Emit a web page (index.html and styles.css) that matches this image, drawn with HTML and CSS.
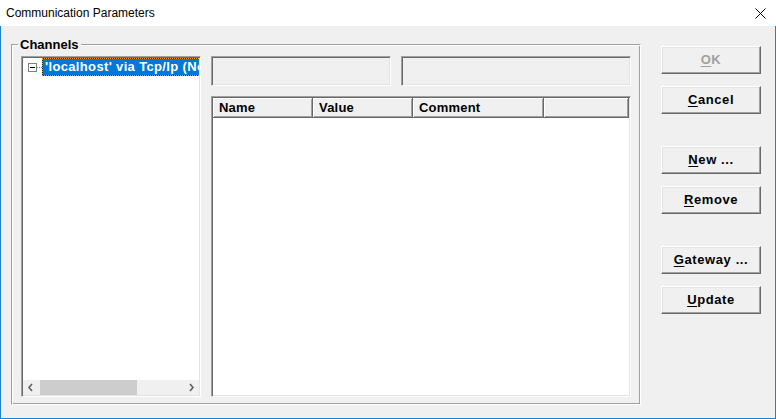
FILE: index.html
```html
<!DOCTYPE html>
<html>
<head>
<meta charset="utf-8">
<link rel="stylesheet" href="styles.css">
</head>
<body>
<div class="window">
  <div class="titlebar">
    <span class="title">Communication Parameters</span>
    <svg class="close" width="11" height="11" viewBox="0 0 11 11">
      <path d="M0.5 0.5 L10.5 10.5 M10.5 0.5 L0.5 10.5" stroke="#000" stroke-width="1" fill="none"/>
    </svg>
  </div>
  <div class="body">
    <div class="group">
      <span class="legend">Channels</span>
      <div class="tree sunken">
        <div class="tree-items">
          <div class="node">
            <span class="expander"><span class="minus"></span></span>
            <span class="dots"></span>
            <span class="label">'localhost' via Tcp/Ip (Nothing)</span>
          </div>
        </div>
        <div class="hscroll">
          <span class="arrow">
            <svg width="17" height="15" viewBox="0 0 17 15"><path d="M9 4 L6 7.5 L9 11" stroke="#606060" stroke-width="1.6" fill="none"/></svg>
          </span>
          <div class="track"><div class="thumb"></div></div>
          <span class="arrow">
            <svg width="17" height="15" viewBox="0 0 17 15"><path d="M8 4 L11 7.5 L8 11" stroke="#606060" stroke-width="1.6" fill="none"/></svg>
          </span>
        </div>
      </div>
      <div class="right">
        <div class="fields">
          <div class="field sunken f1"></div>
          <div class="field sunken f2"></div>
        </div>
        <div class="list sunken">
          <div class="header">
            <div class="col c-name">Name</div>
            <div class="col c-value">Value</div>
            <div class="col c-comment">Comment</div>
            <div class="col c-fill"></div>
          </div>
          <div class="list-body"></div>
        </div>
      </div>
    </div>
    <div class="buttons">
      <button class="btn disabled"><u>O</u>K</button>
      <button class="btn sep"><u>C</u>ancel</button>
      <button class="btn"><u>N</u>ew ...</button>
      <button class="btn sep"><u>R</u>emove</button>
      <button class="btn"><u>G</u>ateway ...</button>
      <button class="btn"><u>U</u>pdate</button>
    </div>
  </div>
</div>
</body>
</html>
```

FILE: styles.css
```css
* { box-sizing: border-box; }
html, body { margin: 0; padding: 0; }
body {
  width: 776px;
  height: 419px;
  overflow: hidden;
  font-family: "Liberation Sans", Arial, sans-serif;
  background: #f0f0f0;
}
.window { width: 776px; height: 419px; display: flex; flex-direction: column; }
.titlebar {
  height: 26px;
  flex: none;
  background: #fff;
  display: flex;
  justify-content: space-between;
  align-items: flex-start;
  padding: 0 10px 0 6px;
}
.title { font-size: 12px; line-height: 26px; color: #000; }
.close { margin-top: 8px; display: block; }

.body {
  height: 393px;
  flex: none;
  background: #f0f0f0;
  border: 1px solid #1883d7;
  border-top: none;
  display: flex;
  align-items: flex-start;
  padding: 18px 0 0 10px;
}

.group {
  position: relative;
  width: 630px;
  height: 361px;
  flex: none;
  border: 1px solid;
  border-color: #a0a0a0 #fff #fff #a0a0a0;
  box-shadow: inset 1px 1px #fff, inset -1px -1px #a0a0a0;
  padding: 11px 9px 7px 9px;
  display: flex;
  gap: 10px;
}
.legend {
  position: absolute;
  top: -7px;
  left: 6px;
  padding: 0 2px;
  background: #f0f0f0;
  font-size: 13px;
  font-weight: bold;
  line-height: 13px;
  color: #000;
}

.sunken {
  border: 1px solid;
  border-color: #a0a0a0 #fff #fff #a0a0a0;
  box-shadow: inset 1px 1px #696969, inset -1px -1px #e3e3e3;
  padding: 1px;
}

.tree {
  width: 180px;
  height: 341px;
  flex: none;
  background: #fff;
  display: flex;
  flex-direction: column;
}
.tree-items { flex: 1; overflow: hidden; background: #fff; }
.node { display: flex; align-items: flex-start; height: 18px; white-space: nowrap; }
.expander {
  margin: 5px 0 0 5px;
  width: 9px;
  height: 9px;
  flex: none;
  border: 1px solid #808080;
  background: #fff;
  position: relative;
}
.minus {
  position: absolute;
  left: 1px;
  top: 3px;
  width: 5px;
  height: 1px;
  background: #000;
}
.dots {
  margin-top: 9px;
  width: 5px;
  height: 1px;
  flex: none;
  background: repeating-linear-gradient(90deg, #808080 0 1px, transparent 1px 2px);
}
.label {
  flex: none;
  height: 18px;
  padding: 0 3px 0 2px;
  font-size: 13px;
  font-weight: bold;
  line-height: 16px;
  letter-spacing: 0.35px;
  color: #fff;
  border: 1px dotted #ff9a1e;
  background: linear-gradient(#0078d7, #0078d7) padding-box, #1a1a1a border-box;
}

.hscroll { height: 15px; flex: none; display: flex; background: #f0f0f0; }
.arrow { width: 17px; flex: none; display: block; }
.arrow svg { display: block; }
.track { flex: 1; display: flex; }
.thumb { width: 97px; height: 15px; background: #cdcdcd; }

.right { width: 420px; flex: none; display: flex; flex-direction: column; gap: 10px; }
.fields { display: flex; gap: 10px; height: 30px; }
.field { height: 30px; background: #f0f0f0; }
.f1 { width: 180px; }
.f2 { width: 230px; }

.list { height: 301px; background: #fff; display: flex; flex-direction: column; }
.header { display: flex; height: 20px; flex: none; }
.col {
  height: 20px;
  background: #f0f0f0;
  border-right: 1px solid #696969;
  border-bottom: 1px solid #696969;
  box-shadow: inset 1px 1px #fff, inset -1px -1px #a0a0a0;
  padding-left: 6px;
  font-size: 13px;
  font-weight: bold;
  line-height: 19px;
  letter-spacing: 0.2px;
  color: #000;
  flex: none;
}
.c-name { width: 100px; }
.c-value { width: 100px; }
.c-comment { width: 131px; }
.c-fill { flex: 1; }
.list-body { flex: 1; background: #fff; }

.buttons { width: 100px; margin: 2px 0 0 20px; display: flex; flex-direction: column; }
.btn {
  width: 100px;
  height: 28px;
  margin: 0 0 12px 0;
  padding: 0;
  background: #f0f0f0;
  border: 1px solid;
  border-color: #fff #696969 #696969 #fff;
  box-shadow: inset -1px -1px #a0a0a0, inset 1px 1px #e3e3e3;
  font-family: "Liberation Sans", Arial, sans-serif;
  font-size: 13px;
  font-weight: bold;
  letter-spacing: 0.6px;
  color: #000;
  line-height: 26px;
  text-align: center;
}
.btn.sep { margin-bottom: 32px; }
.btn.disabled { color: #a0a0a0; }
.btn u { text-decoration-thickness: 1px; text-underline-offset: 2px; }
```
